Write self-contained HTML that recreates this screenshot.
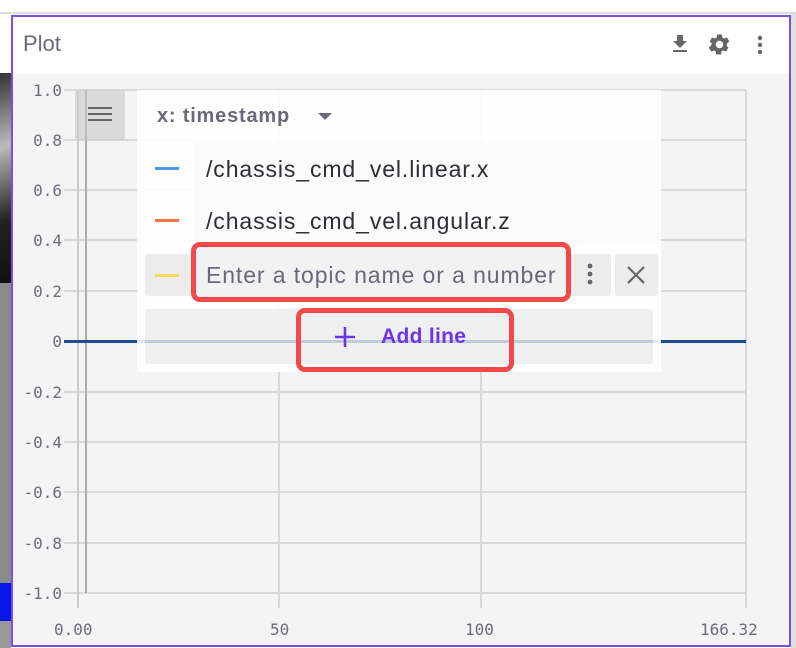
<!DOCTYPE html>
<html><head><style>
*{margin:0;padding:0;box-sizing:border-box}
body{width:796px;height:648px;background:#fff;position:relative;overflow:hidden;font-family:"Liberation Sans",sans-serif}
.a{position:absolute}
.yl{position:absolute;left:20px;width:42px;text-align:right;font-family:"DejaVu Sans Mono","Liberation Mono",monospace;font-size:16px;color:#6f6c7a;line-height:18px}
.xl{position:absolute;top:620px;font-family:"DejaVu Sans Mono","Liberation Mono",monospace;font-size:16px;color:#6f6c7a}
.hg{position:absolute;left:64px;width:682px;height:2px;background:#d8d8d8}
.vg{position:absolute;top:90px;height:518px;width:2px;background:#d8d8d8}
.t{font-size:23px;letter-spacing:0.9px;color:#2d2d33}
</style></head><body>
<div class="a" style="left:0;top:12px;width:796px;height:2px;background:#ddd"></div>
<div class="a" style="left:0;top:73px;width:11px;height:210px;background:linear-gradient(160deg,#333 0%,#bbb 35%,#222 70%,#111 100%)"></div>
<div class="a" style="left:0;top:283px;width:11px;height:300px;background:#8a8a8a"></div>
<div class="a" style="left:0;top:583px;width:11px;height:38px;background:#0a16e8"></div>
<div class="a" style="left:0;top:621px;width:11px;height:27px;background:#999"></div>
<div class="a" style="left:791px;top:14px;width:5px;height:634px;background:#e0e0e0"></div>
<div class="a" style="left:11px;top:15px;width:780px;height:632px;border:2px solid #7a4fe6;background:#f4f4f4"></div>
<div class="a" style="left:13px;top:17px;width:776px;height:57px;background:#fff"></div>
<div class="a" style="left:23px;top:31px;font-size:22px;color:#6b6879">Plot</div>
<svg class="a" style="left:668px;top:32px" width="24" height="24" viewBox="0 0 24 24"><path d="M19 9h-4V3H9v6H5l7 7 7-7zM5 18v2h14v-2H5z" fill="#666"/></svg>
<svg class="a" style="left:707px;top:32px" width="25" height="25" viewBox="0 0 24 24"><path fill="#666" d="M19.14 12.94c.04-.3.06-.61.06-.94s-.02-.64-.07-.94l2.03-1.58a.49.49 0 00.12-.61l-1.920-3.32a.49.49 0 00-.59-.22l-2.39.96c-.5-.38-1.03-.7-1.62-.94l-.36-2.54a.48.48 0 00-.48-.41h-3.84c-.24 0-.43.17-.47.41l-.36 2.54c-.59.24-1.13.57-1.62.94l-2.39-.96a.48.48 0 00-.59.22L2.74 8.87c-.12.21-.8.47.12.61l2.03 1.58c-.05.3-.9.63-.9.94s.2.64.07.94l-2.03 1.58a.49.49 0 00-.12.61l1.92 3.32c.12.22.37.29.59.22l2.39-.96c.5.38 1.030.7 1.62.94l.36 2.54c.5.24.24.41.48.41h3.84c.24 0 .44-.17.47-.41l.36-2.54c.59-.24 1.13-.56 1.62-.94l2.39.96c.22.08.47 0 .59-.22l1.92-3.32c.12-.22.07-.47-.12-.61l-2.01-1.58zM12 15.6A3.6 3.6 0 1112 8.4a3.6 3.6 0 010 7.2z"/></svg>
<svg class="a" style="left:754px;top:34px" width="12" height="22"><circle cx="6" cy="4" r="2.2" fill="#666"/><circle cx="6" cy="11" r="2.2" fill="#666"/><circle cx="6" cy="18" r="2.2" fill="#666"/></svg>
<div class="hg" style="top:89px"></div><div class="hg" style="top:139px"></div><div class="hg" style="top:189px"></div><div class="hg" style="top:239px"></div><div class="hg" style="top:290px"></div><div class="hg" style="top:391px"></div><div class="hg" style="top:441px"></div><div class="hg" style="top:491px"></div><div class="hg" style="top:542px"></div><div class="hg" style="top:592px"></div>
<div class="vg" style="left:77px;background:#ccc"></div><div class="vg" style="left:278px"></div><div class="vg" style="left:480px"></div><div class="vg" style="left:745px"></div>
<div class="vg" style="left:85px;width:2px;height:503px;background:#aaa"></div>
<div class="a" style="left:64px;top:340px;width:682px;height:3px;background:#1f4e8c"></div>
<div class="yl" style="top:82px">1.0</div><div class="yl" style="top:132px">0.8</div><div class="yl" style="top:182px">0.6</div><div class="yl" style="top:232px">0.4</div><div class="yl" style="top:283px">0.2</div><div class="yl" style="top:333px">0</div><div class="yl" style="top:384px">-0.2</div><div class="yl" style="top:434px">-0.4</div><div class="yl" style="top:484px">-0.6</div><div class="yl" style="top:535px">-0.8</div><div class="yl" style="top:585px">-1.0</div>
<div class="xl" style="left:54px">0.00</div><div class="xl" style="left:270px">50</div><div class="xl" style="left:465px">100</div><div class="xl" style="left:700px">166.32</div>
<div class="a" style="left:75px;top:90px;width:50px;height:50px;background:rgba(200,200,200,0.6);border-radius:3px"></div>
<div class="a" style="left:88px;top:107px;width:24px;height:2px;background:#666;box-shadow:0 6px 0 #666,0 12px 0 #666"></div>
<div class="a" style="left:137px;top:90px;width:524px;height:282px;background:rgba(255,255,255,0.88)"></div>
<div class="a" style="left:157px;top:105px;font-size:20px;letter-spacing:0.8px;font-weight:bold;color:#6b6879">x: timestamp</div>
<div class="a" style="left:318px;top:113px;width:0;height:0;border-left:7px solid transparent;border-right:7px solid transparent;border-top:7px solid #6b6879"></div>
<div class="a" style="left:194px;top:142px;width:466px;height:102px;background:rgba(250,250,250,0.7)"></div>
<div class="a" style="left:155px;top:167px;width:24px;height:3px;background:#4b96e6"></div>
<div class="a t" style="left:206px;top:156px">/chassis_cmd_vel.linear.x</div>
<div class="a" style="left:155px;top:219px;width:24px;height:3px;background:#f7744a"></div>
<div class="a t" style="left:206px;top:208px">/chassis_cmd_vel.angular.z</div>
<div class="a" style="left:145px;top:254px;width:466px;height:42px;background:#ececec;border-radius:3px"></div>
<div class="a" style="left:155px;top:274px;width:24px;height:3px;background:#f5d85e"></div>
<div class="a" style="left:615px;top:254px;width:43px;height:42px;background:#ececec;border-radius:3px"></div>
<svg class="a" style="left:625px;top:264px" width="22" height="22"><path d="M3 3L19 19M19 3L3 19" stroke="#666" stroke-width="2.2"/></svg>
<svg class="a" style="left:584px;top:262px" width="12" height="26"><circle cx="6" cy="4" r="2.4" fill="#666"/><circle cx="6" cy="12" r="2.4" fill="#666"/><circle cx="6" cy="20" r="2.4" fill="#666"/></svg>
<div class="a" style="left:191px;top:242px;width:380px;height:60px;border:5px solid #f24a4a;border-radius:9px;background:#f2f2f2"></div>
<div class="a t" style="left:206px;top:262px;color:#6b6879;white-space:nowrap;width:353px;overflow:hidden">Enter a topic name or a number</div>
<div class="a" style="left:145px;top:309px;width:508px;height:55px;background:rgba(236,236,236,0.85);border-radius:3px"></div>
<div class="a" style="left:145px;top:340px;width:508px;height:3px;background:rgba(31,78,140,0.2)"></div>
<div class="a" style="left:296px;top:308px;width:218px;height:64px;border:5px solid #f24a4a;border-radius:9px"></div>
<svg class="a" style="left:333px;top:325px" width="24" height="24"><path d="M12 2V22M2 12H22" stroke="#6e35e8" stroke-width="2.6"/></svg>
<div class="a" style="left:381px;top:325px;font-size:21px;letter-spacing:0.3px;font-weight:bold;color:#6e35e8">Add line</div>
</body></html>
